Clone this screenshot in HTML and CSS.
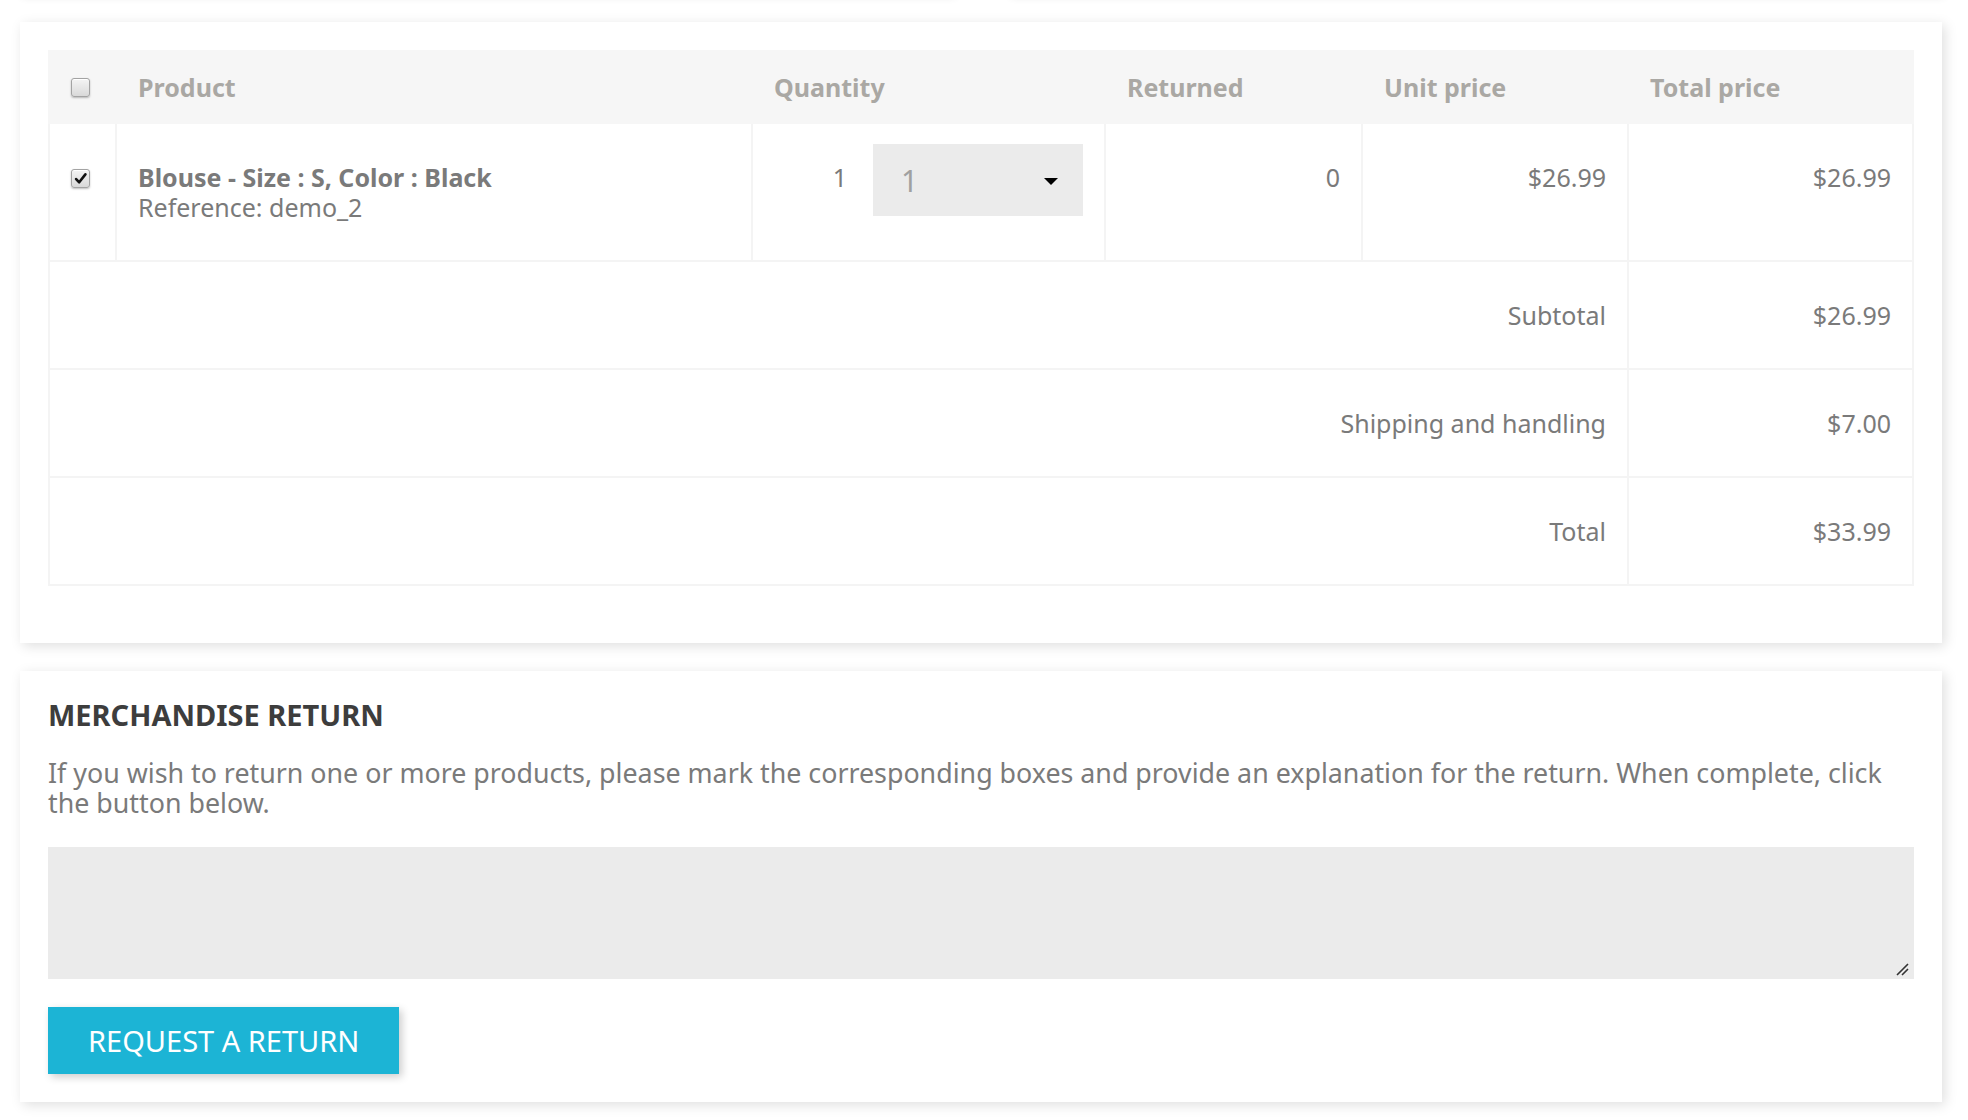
FILE: index.html
```html
<!DOCTYPE html>
<html lang="en">
<head>
<meta charset="utf-8">
<title>Order details</title>
<link rel="stylesheet" href="styles.css">
</head>
<body>
<div class="page">
  <div class="addresses">
    <div class="address-box"></div>
    <div class="address-box"></div>
  </div>

  <section class="card">
    <table class="products">
      <colgroup>
        <col class="c-check"><col class="c-product"><col class="c-qty"><col class="c-returned"><col class="c-unit"><col class="c-total">
      </colgroup>
      <thead>
        <tr>
          <th><span class="cb"></span></th>
          <th>Product</th>
          <th>Quantity</th>
          <th>Returned</th>
          <th>Unit price</th>
          <th>Total price</th>
        </tr>
      </thead>
      <tbody>
        <tr class="item">
          <td><span class="cb checked"><svg viewBox="0 0 12 12" width="13" height="13"><path d="M2 6.5 L4.8 9.5 L10.5 2.2" fill="none" stroke="#111" stroke-width="2.4" stroke-linecap="round" stroke-linejoin="round"/></svg></span></td>
          <td>
            <div class="pname">Blouse - Size : S, Color : Black</div>
            <div class="pref">Reference: demo_2</div>
          </td>
          <td>
            <div class="qty">
              <span class="qty-current">1</span>
              <div class="select"><span class="select-value">1</span><span class="caret"></span></div>
            </div>
          </td>
          <td class="num">0</td>
          <td class="num">$26.99</td>
          <td class="num">$26.99</td>
        </tr>
        <tr>
          <td colspan="5" class="num">Subtotal</td>
          <td class="num">$26.99</td>
        </tr>
        <tr>
          <td colspan="5" class="num">Shipping and handling</td>
          <td class="num">$7.00</td>
        </tr>
        <tr>
          <td colspan="5" class="num">Total</td>
          <td class="num">$33.99</td>
        </tr>
      </tbody>
    </table>
  </section>

  <section class="card return">
    <h3 class="return-title">Merchandise return</h3>
    <p class="return-text">If you wish to return one or more products, please mark the corresponding boxes and provide an explanation for the return. When complete, click the button below.</p>
    <div class="msg-wrap">
      <textarea class="return-msg"></textarea>
      <svg class="grip" viewBox="0 0 14 14" width="14" height="14"><path d="M2 13 L13 2 M7 13 L13 7" stroke="#333" stroke-width="1.6" fill="none"/></svg>
    </div>
    <button class="btn-return" type="button">Request a return</button>
  </section>
</div>
</body>
</html>
```

FILE: styles.css
```css
* { box-sizing: border-box; }

html, body {
  margin: 0;
  background: #fff;
}

body {
  font-family: "Noto Sans", "Open Sans", sans-serif;
  color: #7a7a7a;
  font-size: 25px;
  line-height: 30px;
  overflow: hidden;
}

.page {
  padding: 0 26px 0 20px;
}

.addresses {
  display: flex;
  gap: 56px;
  margin-top: -34px;
  margin-bottom: 28px;
}

.address-box {
  flex: 1;
  height: 28px;
  background: #fff;
  box-shadow: 2px 2px 9px 0 rgba(0, 0, 0, 0.14);
}

.card {
  background: #fff;
  box-shadow: 3px 3px 12px 0 rgba(0, 0, 0, 0.13);
  padding: 28px 28px 57px 28px;
  margin-bottom: 28px;
}

.card.return {
  padding: 28px;
}

.products {
  width: 100%;
  table-layout: fixed;
  border-collapse: collapse;
}

.c-check { width: 67px; }
.c-product { width: 636px; }
.c-qty { width: 353px; }
.c-returned { width: 257px; }
.c-unit { width: 266px; }

.products th {
  background: #f6f6f6;
  color: #aaa8a4;
  font-weight: 700;
  text-align: left;
  padding: 20px 21px;
  border: 2px solid #f6f6f6;
  line-height: 30px;
  vertical-align: top;
}

.products td {
  padding: 38px 21px;
  border: 2px solid #f4f4f4;
  vertical-align: top;
}

.products td.num {
  text-align: right;
}

.cb {
  display: flex;
  align-items: center;
  justify-content: center;
  width: 19px;
  height: 19px;
  margin-top: 6px;
  border: 1px solid #a3a3a3;
  border-radius: 3px;
  background: linear-gradient(#f4f4f4, #d9d9d9);
  box-shadow: 0 1px 2px rgba(0, 0, 0, 0.25), inset 0 1px 0 #fff;
}

.products td .cb { margin-top: 7px; }

.cb svg { display: block; }

.pname {
  font-weight: 700;
}

.qty {
  display: flex;
  justify-content: flex-end;
  align-items: flex-start;
}

.qty-current {
  margin-right: 26px;
}

.select {
  width: 210px;
  height: 72px;
  margin-top: -18px;
  margin-bottom: -12px;
  background: #ebebeb;
  display: flex;
  align-items: center;
  justify-content: space-between;
  padding: 2px 25px 0 28px;
}

.select-value {
  font-size: 30px;
  color: #a0a0a0;
}

.caret {
  width: 0;
  height: 0;
  border-left: 7px solid transparent;
  border-right: 7px solid transparent;
  border-top: 7px solid #000;
}

.return-title {
  margin: 0 0 27px 0;
  font-size: 29px;
  line-height: 32px;
  font-weight: 700;
  text-transform: uppercase;
  color: #3d3d3d;
}

.return-text {
  margin: 0 0 29px 0;
  font-size: 26.8px;
  line-height: 30px;
}

.msg-wrap {
  position: relative;
  margin: 0 0 28px 0;
}

.return-msg {
  display: block;
  width: 100%;
  height: 132px;
  border: 0;
  background: #ebebeb;
  font-family: inherit;
  font-size: 24px;
  resize: none;
}

.grip {
  position: absolute;
  right: 5px;
  bottom: 3px;
}

.btn-return {
  display: block;
  height: 67px;
  padding: 0 40px;
  border: 0;
  background: #1cb4d5;
  color: #fff;
  font-family: inherit;
  font-size: 29px;
  text-transform: uppercase;
  box-shadow: 3px 3px 8px rgba(0, 0, 0, 0.2);
}
```
